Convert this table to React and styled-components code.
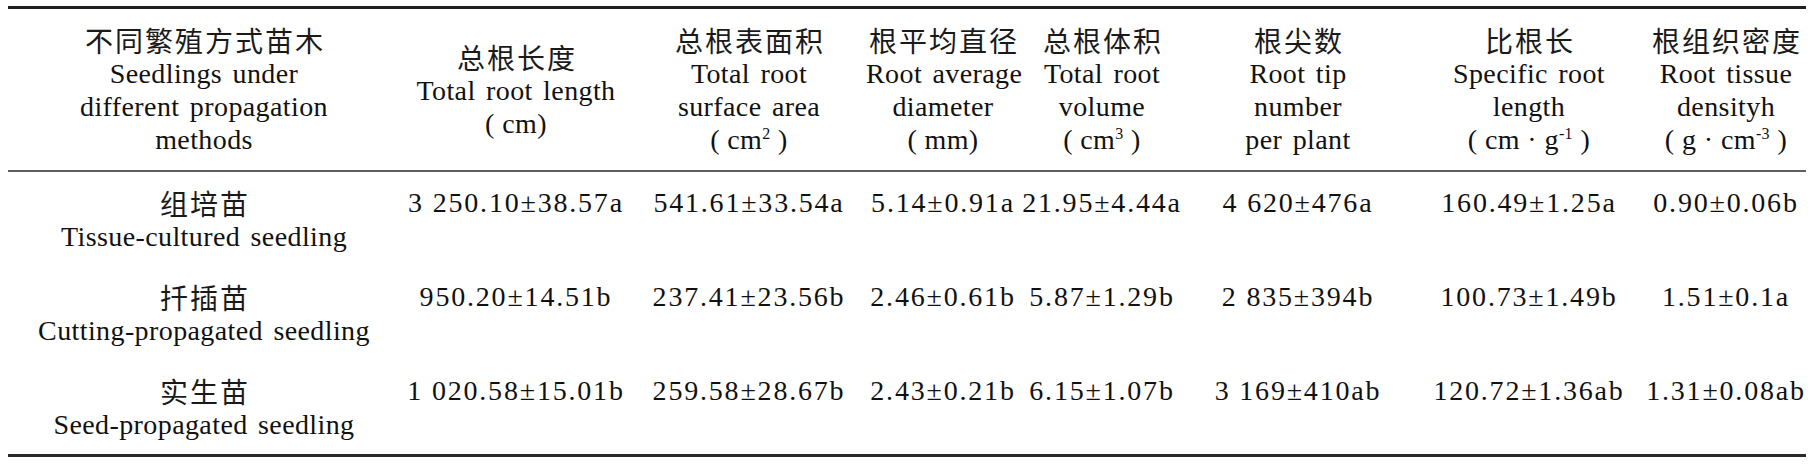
import React from 'react';
import styled, { createGlobalStyle } from 'styled-components';

const GlobalStyle = createGlobalStyle`
  html, body {
    margin: 0;
    padding: 0;
    background: #ffffff;
  }
  body {
    font-family: "Liberation Serif", "Noto Sans CJK SC", serif;
    color: #111111;
  }
`;

// column widths measured from the reference, left to right
const widths = [392, 232, 234, 154, 164, 228, 234, 160];

const headers = [
  { zh: '不同繁殖方式苗木', en: ['Seedlings under', 'different propagation', 'methods'] },
  { zh: '总根长度', en: ['Total root length'], unit: <>( cm)</> },
  { zh: '总根表面积', en: ['Total root', 'surface area'], unit: <>( cm<sup>2</sup> )</> },
  { zh: '根平均直径', en: ['Root average', 'diameter'], unit: <>( mm)</> },
  { zh: '总根体积', en: ['Total root', 'volume'], unit: <>( cm<sup>3</sup> )</> },
  { zh: '根尖数', en: ['Root tip', 'number', 'per plant'] },
  { zh: '比根长', en: ['Specific root', 'length'], unit: <>( cm · g<sup>-1</sup> )</> },
  { zh: '根组织密度', en: ['Root tissue', 'densityh'], unit: <>( g · cm<sup>-3</sup> )</> },
];

const rows = [
  {
    zh: '组培苗',
    en: 'Tissue-cultured seedling',
    values: ['3 250.10±38.57a', '541.61±33.54a', '5.14±0.91a', '21.95±4.44a', '4 620±476a', '160.49±1.25a', '0.90±0.06b'],
  },
  {
    zh: '扦插苗',
    en: 'Cutting-propagated seedling',
    values: ['950.20±14.51b', '237.41±23.56b', '2.46±0.61b', '5.87±1.29b', '2 835±394b', '100.73±1.49b', '1.51±0.1a'],
  },
  {
    zh: '实生苗',
    en: 'Seed-propagated seedling',
    values: ['1 020.58±15.01b', '259.58±28.67b', '2.43±0.21b', '6.15±1.07b', '3 169±410ab', '120.72±1.36ab', '1.31±0.08ab'],
  },
];

export default function App() {
  return (
    <>
      <GlobalStyle />
      <Page>
        <Table>
          <colgroup>
            {widths.map((w, i) => <Col key={i} $w={w} />)}
          </colgroup>
          <thead>
            <tr>
              {headers.map((h, i) => (
                <HeadCell key={i}>
                  <Zh>{h.zh}</Zh>
                  {h.en.map(line => <EnLine key={line}>{line}</EnLine>)}
                  {h.unit && <Unit>{h.unit}</Unit>}
                </HeadCell>
              ))}
            </tr>
          </thead>
          <tbody>
            {rows.map(row => (
              <tr key={row.zh}>
                <Cell>
                  <Zh>{row.zh}</Zh>
                  <EnLine>{row.en}</EnLine>
                </Cell>
                {row.values.map((v, i) => (
                  <Cell key={i}>
                    <Value>{v}</Value>
                  </Cell>
                ))}
              </tr>
            ))}
          </tbody>
        </Table>
      </Page>
    </>
  );
}

const Page = styled.div`
  padding: 6px 8px 0 8px;
  width: 1815px;
  box-sizing: border-box;
`;
const Table = styled.table`
  table-layout: fixed;
  width: 1798px;
  border-collapse: separate;
  border-spacing: 0;
  border-top: 3px solid #1e1e1e;
  border-bottom: 3px solid #2a2a2a;
`;
const Col = styled.col`
  width: ${p => p.$w}px;
`;
const HeadCell = styled.th`
  font-weight: normal;
  text-align: center;
  vertical-align: middle;
  padding: 15px 0 14px 0;
  border-bottom: 2px solid #5e5e5e;
  font-size: 28px;
  line-height: 33px;
  white-space: nowrap;
`;
const Cell = styled.td`
  text-align: center;
  vertical-align: top;
  padding: 14px 0 12px 0;
  font-size: 28px;
  line-height: 34px;
  white-space: nowrap;
`;
const Zh = styled.div`
  font-family: "Noto Sans CJK SC", sans-serif;
  font-size: 28px;
  letter-spacing: 2px;
  text-indent: 2px;
  color: #1a1a1a;
`;
const EnLine = styled.div`
  letter-spacing: 0.4px;
  word-spacing: 3px;
`;
const Unit = styled.div`
  letter-spacing: 0.4px;
  sup {
    font-size: 16px;
    line-height: 0;
    vertical-align: 10px;
  }
`;
const Value = styled.div`
  letter-spacing: 1.8px;
`;
